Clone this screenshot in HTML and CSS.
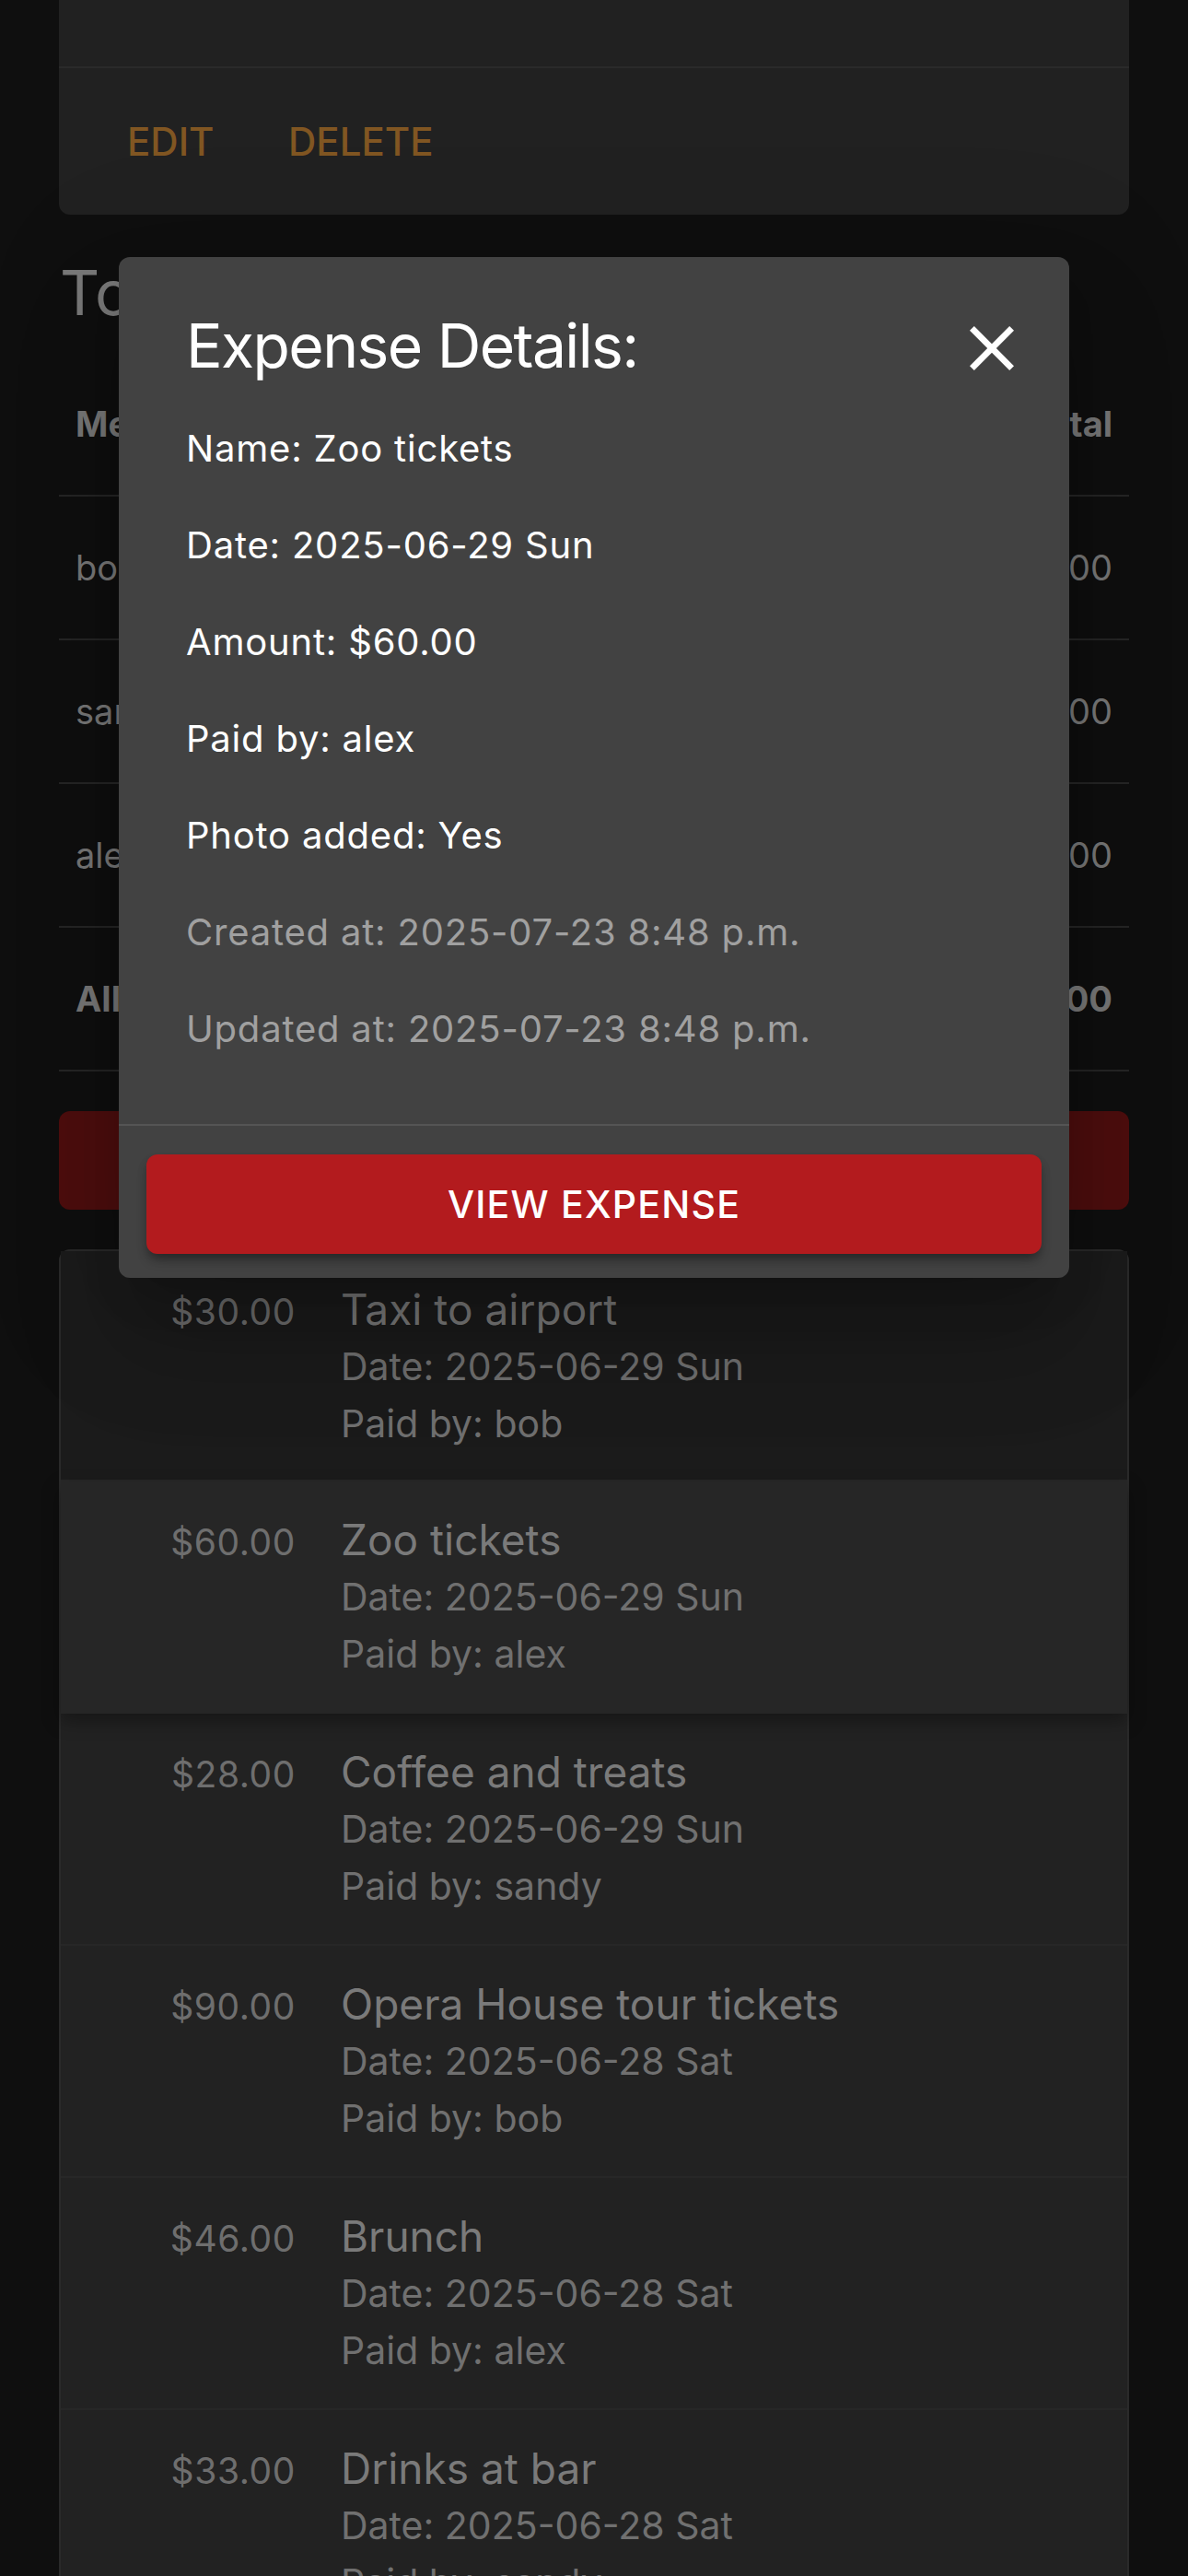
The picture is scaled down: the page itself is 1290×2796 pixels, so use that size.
FILE: index.html
```html
<!DOCTYPE html>
<html lang="en">
<head>
<meta charset="utf-8">
<title>Trip expenses</title>
<link rel="stylesheet" href="styles.css">
</head>
<body>
<div class="page">
  <section class="card-top">
    <div class="card-top-body"></div>
    <div class="card-actions">
      <button class="text-btn edit">Edit</button>
      <button class="text-btn">Delete</button>
    </div>
  </section>

  <h2 class="totals-title">Totals</h2>
  <div class="totals">
    <div class="trow thead"><span>Member</span><span class="num">Total</span></div>
    <div class="trow"><span>bob</span><span class="num">$58.00</span></div>
    <div class="trow"><span>sandy</span><span class="num">$34.00</span></div>
    <div class="trow"><span>alex</span><span class="num">$44.00</span></div>
    <div class="trow total"><span>All</span><span class="num">$287.00</span></div>
  </div>

  <button class="add-btn">Add expense</button>

  <ul class="expense-list">
    <li class="expense">
      <span class="exp-amount">$30.00</span>
      <div class="exp-text"><div class="exp-title">Taxi to airport</div><div class="exp-meta">Date: 2025-06-29 Sun</div><div class="exp-meta">Paid by: bob</div></div>
    </li>
    <li class="expense selected">
      <span class="exp-amount">$60.00</span>
      <div class="exp-text"><div class="exp-title">Zoo tickets</div><div class="exp-meta">Date: 2025-06-29 Sun</div><div class="exp-meta">Paid by: alex</div></div>
    </li>
    <li class="expense">
      <span class="exp-amount">$28.00</span>
      <div class="exp-text"><div class="exp-title">Coffee and treats</div><div class="exp-meta">Date: 2025-06-29 Sun</div><div class="exp-meta">Paid by: sandy</div></div>
    </li>
    <li class="expense">
      <span class="exp-amount">$90.00</span>
      <div class="exp-text"><div class="exp-title">Opera House tour tickets</div><div class="exp-meta">Date: 2025-06-28 Sat</div><div class="exp-meta">Paid by: bob</div></div>
    </li>
    <li class="expense">
      <span class="exp-amount">$46.00</span>
      <div class="exp-text"><div class="exp-title">Brunch</div><div class="exp-meta">Date: 2025-06-28 Sat</div><div class="exp-meta">Paid by: alex</div></div>
    </li>
    <li class="expense">
      <span class="exp-amount">$33.00</span>
      <div class="exp-text"><div class="exp-title">Drinks at bar</div><div class="exp-meta">Date: 2025-06-28 Sat</div><div class="exp-meta">Paid by: sandy</div></div>
    </li>
  </ul>
</div>

<div class="dialog" role="dialog">
  <div class="dialog-title">
    <h2 class="dialog-heading">Expense Details:</h2>
    <button class="close-btn" aria-label="close">
      <svg width="48" height="48" viewBox="5 5 14 14"><path fill="#ffffff" d="M19 6.41 17.59 5 12 10.59 6.41 5 5 6.41 10.59 12 5 17.59 6.41 19 12 13.41 17.59 19 19 17.59 13.41 12z"/></svg>
    </button>
  </div>
  <div class="dialog-content">
    <p class="line">Name: Zoo tickets</p>
    <p class="line">Date: 2025-06-29 Sun</p>
    <p class="line">Amount: $60.00</p>
    <p class="line">Paid by: alex</p>
    <p class="line">Photo added: Yes</p>
    <p class="line muted">Created at: 2025-07-23 8:48 p.m.</p>
    <p class="line muted">Updated at: 2025-07-23 8:48 p.m.</p>
  </div>
  <div class="dialog-actions">
    <button class="view-btn">View Expense</button>
  </div>
</div>
</body>
</html>
```
FILE: styles.css
```css
* { box-sizing: border-box; }
html, body { margin: 0; padding: 0; }
body {
  width: 1290px;
  height: 2796px;
  overflow: hidden;
  position: relative;
  background: #0f0f0f;
  font-family: Inter, "Noto Sans", sans-serif;
}
.page { padding: 0 64px; }

.card-top {
  height: 233px;
  background: #212121;
  border-radius: 0 0 12px 12px;
}
.card-top-body { height: 74px; border-bottom: 2px solid #2a2a2a; }
.card-actions { display: flex; padding: 50px 0 0 74px; }
.text-btn {
  font-family: Inter, sans-serif;
  font-weight: 500;
  font-size: 42px;
  line-height: 60px;
  letter-spacing: 0;
  color: #815622;
  background: none;
  border: 0;
  padding: 0;
  text-transform: uppercase;
  text-align: left;
}
.text-btn.edit { width: 175px; }

.totals-title {
  margin: 45px 0 25px 1px;
  font-weight: 400;
  font-size: 67px;
  line-height: 80px;
  color: #7b7b7b;
}
.trow {
  display: grid;
  grid-template-columns: 1fr 1fr;
  align-items: center;
  height: 156px;
  padding: 0 18px;
  border-bottom: 2px solid #262626;
  font-size: 38px;
  color: #7a7a7a;
}
.trow .num { text-align: right; }
.trow.thead, .trow.total { font-weight: 700; }

.add-btn {
  display: block;
  width: 100%;
  height: 107px;
  margin-top: 43px;
  border: 0;
  border-radius: 12px;
  background: #4f0e0e;
  color: #6e3a3a;
  font-family: Inter, sans-serif;
  font-size: 41px;
  font-weight: 500;
  text-transform: uppercase;
}

.expense-list {
  list-style: none;
  margin: 43px 0 0;
  padding: 0;
  border: 2px solid #2a2a2a;
  border-radius: 12px 12px 0 0;
  background: #222222;
}
.expense {
  display: flex;
  align-items: first baseline;
  height: 252px;
  padding-top: 32px;
  border-bottom: 2px solid #272727;
}
.expense:first-child { height: 250px; background: #1b1b1b; }
.expense.selected {
  position: relative;
  z-index: 1;
  background: #262626;
  box-shadow: 0 8px 18px rgba(0, 0, 0, 0.35);
  border-bottom-color: #262626;
}
.exp-amount {
  width: 255px;
  margin-right: 49px;
  text-align: right;
  font-size: 39px;
  line-height: 62px;
  letter-spacing: 0.6px;
  color: #6e6e6e;
}
.exp-title { font-size: 46px; line-height: 62px; color: #7a7a7a; }
.exp-meta { font-size: 41px; line-height: 62px; color: #707070; }

.dialog {
  position: absolute;
  left: 129px;
  top: 279px;
  width: 1032px;
  background: #424242;
  border-radius: 12px;
  box-shadow: 0 33px 45px -21px rgba(0,0,0,0.2), 0 72px 114px 9px rgba(0,0,0,0.14), 0 27px 138px 24px rgba(0,0,0,0.12);
  color: #ffffff;
}
.dialog-title {
  display: flex;
  justify-content: space-between;
  align-items: center;
  padding: 56px 60px 0 73px;
}
.dialog-heading {
  margin: 0;
  font-weight: 400;
  font-size: 66px;
  line-height: 80px;
  letter-spacing: -1.6px;
}
.close-btn {
  display: flex;
  width: 48px;
  height: 48px;
  margin-top: 6px;
  padding: 0;
  border: 0;
  background: none;
}
.dialog-content { padding: 19px 73px 51px; }
.line {
  margin: 0;
  font-size: 40px;
  line-height: 105px;
  letter-spacing: 0.8px;
  color: #ffffff;
}
.line.muted { color: #a0a0a0; }
.dialog-actions {
  border-top: 2px solid #555555;
  padding: 31px 30px 26px;
}
.view-btn {
  display: block;
  width: 100%;
  height: 108px;
  border: 0;
  border-radius: 12px;
  background: #b31b1e;
  box-shadow: 0 9px 15px -6px rgba(0,0,0,0.35), 0 6px 10px rgba(0,0,0,0.2);
  color: #ffffff;
  font-family: Inter, sans-serif;
  font-weight: 500;
  font-size: 41px;
  letter-spacing: 1.2px;
  text-transform: uppercase;
}
```
